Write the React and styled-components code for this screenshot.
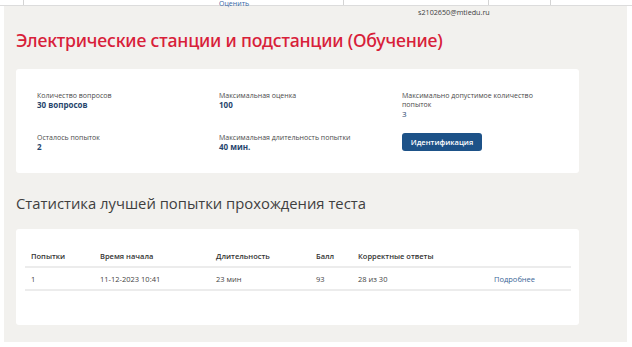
import React from 'react'
import styled, { createGlobalStyle } from 'styled-components'

const GlobalStyle = createGlobalStyle`
  html, body {
    margin: 0;
    padding: 0;
    background: #ffffff;
  }
  body {
    font-family: "Open Sans", "Noto Sans", sans-serif;
    color: #333;
  }
`

const TopStrip = styled.div`
  display: grid;
  grid-template-columns: 23px 320px 145px 62px 1fr;
  height: 5px;
  border-bottom: 1px solid #dcdcdc;
  background: #fff;
`

const StripCell = styled.div`
  border-left: ${p => (p.$edge ? '1px solid #d4d4d4' : 'none')};
  height: 5px;
  position: relative;
  z-index: 1;
`

const RateLink = styled.span`
  display: block;
  padding-left: 195px;
  font-size: 7px;
  line-height: 7px;
  color: #3466a6;
`

const Canvas = styled.main`
  background: #f2f1ee;
  margin: 0 5px 0 4px;
  padding: 0 0 17px 12px;
  height: 319px;
  box-sizing: content-box;
`

const UserRow = styled.div`
  height: 19px;
  padding-left: 402px;
  font-size: 7.2px;
  line-height: 12px;
  color: #3d3d3d;
`

const PageTitle = styled.h1`
  margin: 3px 0 0;
  font-family: "Noto Sans", "Open Sans", sans-serif;
  font-weight: 500;
  font-size: 17.7px;
  line-height: 24px;
  letter-spacing: -0.2px;
  color: #d82039;
`

const Card = styled.section`
  width: 563px;
  background: #ffffff;
  border-radius: 3px;
  box-sizing: border-box;
  margin-top: ${p => p.$top}px;
  height: ${p => p.$height}px;
`

const InfoGrid = styled.div`
  display: grid;
  grid-template-columns: 182px 183px 1fr;
  grid-template-rows: 42px auto;
  padding: 22px 0 0 21px;
`

const Field = styled.div`
  display: flex;
  flex-direction: column;
`

const Label = styled.span`
  font-size: 7px;
  line-height: 9px;
  color: #4a4a4a;
  max-width: ${p => p.$max || 'none'};
`

const Value = styled.span`
  font-size: 8px;
  line-height: 9px;
  font-weight: ${p => (p.$plain ? 400 : 700)};
  color: #27456d;
`

const IdentButton = styled.button`
  width: 80px;
  height: 18px;
  padding: 0;
  border: none;
  border-radius: 3px;
  background: #1d5288;
  color: #fff;
  font-family: "Open Sans", sans-serif;
  font-weight: 600;
  font-size: 7.5px;
  cursor: pointer;
`

const SectionTitle = styled.h2`
  margin: 19px 0 0;
  font-weight: 400;
  font-size: 14.8px;
  line-height: 22px;
  color: #3f3f3f;
`

const Table = styled.div`
  padding: 16px 8px 0 9px;
`

const Row = styled.div`
  display: grid;
  grid-template-columns: 69px 116px 100px 42px 136px 1fr;
  height: 21px;
  align-items: center;
  border-bottom: 2px solid #ececec;
  font-size: 7.5px;
  color: ${p => (p.$head ? '#333' : '#444')};
  font-weight: ${p => (p.$head ? 600 : 400)};
`

const Cell = styled.div`
  padding-left: 6px;
`

const MoreLink = styled.a`
  padding-left: 6px;
  color: #3a6696;
  text-decoration: none;
`

const heads = ['Попытки', 'Время начала', 'Длительность', 'Балл', 'Корректные ответы', '']
const attempts = [{ n: '1', start: '11-12-2023 10:41', dur: '23 мин', score: '93', correct: '28 из 30' }]

export default function App() {
  return (
    <>
      <GlobalStyle />
      <TopStrip>
        <StripCell />
        <StripCell $edge>
          <RateLink>Оценить</RateLink>
        </StripCell>
        <StripCell $edge />
        <StripCell $edge />
        <StripCell $edge />
      </TopStrip>
      <Canvas>
        <UserRow>s2102650@mtiedu.ru</UserRow>
        <PageTitle>Электрические станции и подстанции (Обучение)</PageTitle>
        <Card $top={17} $height={104}>
          <InfoGrid>
            <Field>
              <Label>Количество вопросов</Label>
              <Value>30 вопросов</Value>
            </Field>
            <Field>
              <Label>Максимальная оценка</Label>
              <Value>100</Value>
            </Field>
            <Field>
              <Label $max="132px">Максимально допустимое количество попыток</Label>
              <Value $plain>3</Value>
            </Field>
            <Field>
              <Label>Осталось попыток</Label>
              <Value>2</Value>
            </Field>
            <Field>
              <Label>Максимальная длительность попытки</Label>
              <Value>40 мин.</Value>
            </Field>
            <Field>
              <IdentButton>Идентификация</IdentButton>
            </Field>
          </InfoGrid>
        </Card>
        <SectionTitle>Статистика лучшей попытки прохождения теста</SectionTitle>
        <Card $top={15} $height={96}>
          <Table>
            <Row $head>
              {heads.map((h, i) => <Cell key={i}>{h}</Cell>)}
            </Row>
            {attempts.map(a => (
              <Row key={a.n}>
                <Cell>{a.n}</Cell>
                <Cell>{a.start}</Cell>
                <Cell>{a.dur}</Cell>
                <Cell>{a.score}</Cell>
                <Cell>{a.correct}</Cell>
                <MoreLink href="#">Подробнее</MoreLink>
              </Row>
            ))}
          </Table>
        </Card>
      </Canvas>
    </>
  )
}
